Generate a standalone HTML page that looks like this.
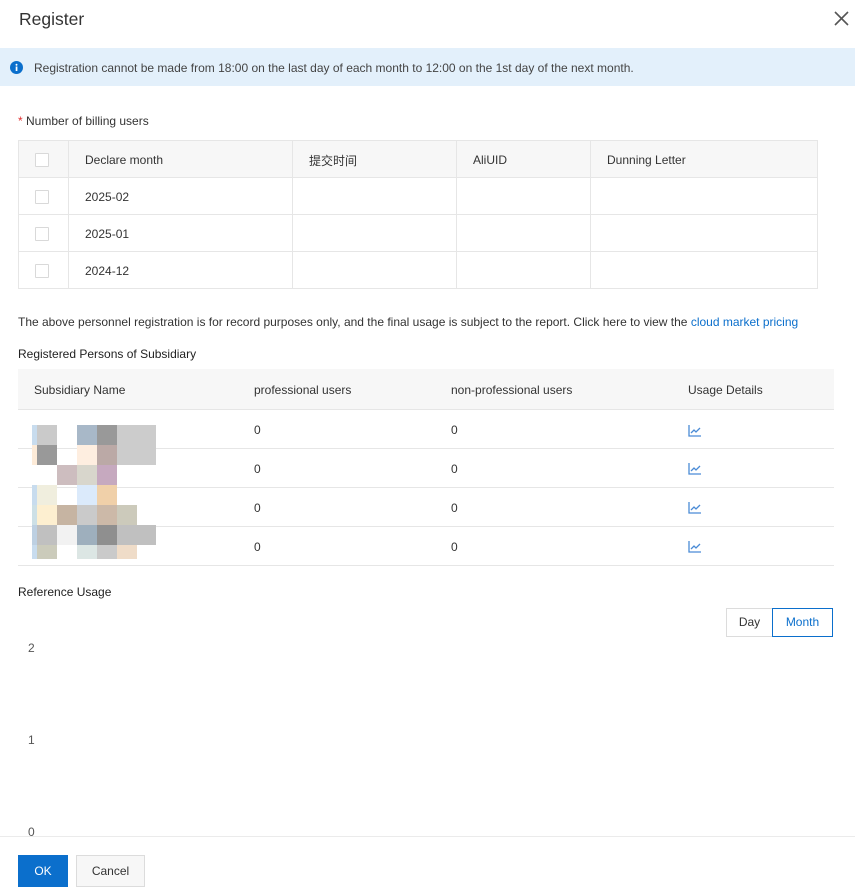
<!DOCTYPE html>
<html><head><meta charset="utf-8"><style>
*{margin:0;padding:0;box-sizing:border-box}
body{width:855px;height:893px;background:#fff;font-family:"Liberation Sans","Noto Sans CJK SC",sans-serif;font-size:12px;color:#333;position:relative;overflow:hidden}
.a{position:absolute;white-space:nowrap}
.cb{position:absolute;width:14px;height:14px;border:1px solid #d9d9d9;background:#fff;border-radius:1px}
.hl{position:absolute;height:1px;background:#e6e6e6}
.vl{position:absolute;width:1px;background:#e6e6e6}
.m{position:absolute;height:20px}
</style></head><body>
<div class="a" style="left:19px;top:9px;font-size:17.5px;color:#333">Register</div>
<svg class="a" style="left:834px;top:11px" width="15" height="15" viewBox="0 0 15 15"><path d="M1 1L14 14M14 1L1 14" stroke="#555" stroke-width="1.6"/></svg>
<div class="a" style="left:0;top:48px;width:855px;height:38px;background:#e3f0fb"></div>
<svg class="a" style="left:10px;top:61px" width="13" height="13" viewBox="0 0 13 13"><circle cx="6.5" cy="6.5" r="6.5" fill="#0b6fcc"/><rect x="5.7" y="5.5" width="1.7" height="4.5" fill="#fff"/><circle cx="6.5" cy="3.7" r="1" fill="#fff"/></svg>
<div class="a" style="left:34px;top:61px;font-size:12px;color:#444">Registration cannot be made from 18:00 on the last day of each month to 12:00 on the 1st day of the next month.</div>
<div class="a" style="left:18px;top:114px"><span style="color:#e03030">*</span> Number of billing users</div>
<div class="a" style="left:18px;top:140px;width:800px;height:149px;border:1px solid #e6e6e6"></div>
<div class="a" style="left:19px;top:141px;width:798px;height:36px;background:#f7f7f7"></div>
<div class="hl" style="left:18px;top:177px;width:800px"></div>
<div class="hl" style="left:18px;top:214px;width:800px"></div>
<div class="hl" style="left:18px;top:251px;width:800px"></div>
<div class="vl" style="left:68px;top:140px;height:149px"></div>
<div class="vl" style="left:292px;top:140px;height:149px"></div>
<div class="vl" style="left:456px;top:140px;height:149px"></div>
<div class="vl" style="left:590px;top:140px;height:149px"></div>
<div class="cb" style="left:35px;top:153px"></div>
<div class="cb" style="left:35px;top:190px"></div>
<div class="cb" style="left:35px;top:227px"></div>
<div class="cb" style="left:35px;top:264px"></div>
<div class="a" style="left:85px;top:153px">Declare month</div>
<div class="a" style="left:309px;top:152px">提交时间</div>
<div class="a" style="left:473px;top:153px">AliUID</div>
<div class="a" style="left:607px;top:153px">Dunning Letter</div>
<div class="a" style="left:85px;top:190px">2025-02</div>
<div class="a" style="left:85px;top:227px">2025-01</div>
<div class="a" style="left:85px;top:264px">2024-12</div>
<div class="a" style="left:18px;top:315px;font-size:12px">The above personnel registration is for record purposes only, and the final usage is subject to the report. Click here to view the <span style="color:#0b6fcc">cloud market pricing</span></div>
<div class="a" style="left:18px;top:347px;color:#222">Registered Persons of Subsidiary</div>
<div class="a" style="left:18px;top:369px;width:816px;height:40px;background:#f7f7f7"></div>
<div class="hl" style="left:18px;top:409px;width:816px"></div>
<div class="hl" style="left:18px;top:448px;width:816px"></div>
<div class="hl" style="left:18px;top:487px;width:816px"></div>
<div class="hl" style="left:18px;top:526px;width:816px"></div>
<div class="hl" style="left:18px;top:565px;width:816px"></div>
<div class="a" style="left:34px;top:383px">Subsidiary Name</div>
<div class="a" style="left:254px;top:383px">professional users</div>
<div class="a" style="left:451px;top:383px">non-professional users</div>
<div class="a" style="left:688px;top:383px">Usage Details</div>
<div class="a" style="left:254px;top:423px">0</div><div class="a" style="left:451px;top:423px">0</div>
<div class="a" style="left:254px;top:462px">0</div><div class="a" style="left:451px;top:462px">0</div>
<div class="a" style="left:254px;top:501px">0</div><div class="a" style="left:451px;top:501px">0</div>
<div class="a" style="left:254px;top:540px">0</div><div class="a" style="left:451px;top:540px">0</div>
<svg class="a" style="left:688px;top:425px" width="13" height="12" viewBox="0 0 13 12"><path d="M1 0V11H13M3 8L6 5L8 7L12 3" stroke="#4a8bd6" stroke-width="1.3" fill="none"/></svg>
<svg class="a" style="left:688px;top:463px" width="13" height="12" viewBox="0 0 13 12"><path d="M1 0V11H13M3 8L6 5L8 7L12 3" stroke="#4a8bd6" stroke-width="1.3" fill="none"/></svg>
<svg class="a" style="left:688px;top:502px" width="13" height="12" viewBox="0 0 13 12"><path d="M1 0V11H13M3 8L6 5L8 7L12 3" stroke="#4a8bd6" stroke-width="1.3" fill="none"/></svg>
<svg class="a" style="left:688px;top:541px" width="13" height="12" viewBox="0 0 13 12"><path d="M1 0V11H13M3 8L6 5L8 7L12 3" stroke="#4a8bd6" stroke-width="1.3" fill="none"/></svg>
<div class="m" style="top:425px;left:32px;width:5px;background:#c8dcee"></div><div class="m" style="top:425px;left:37px;width:20px;background:#cacaca"></div><div class="m" style="top:425px;left:77px;width:20px;background:#a8b8c8"></div><div class="m" style="top:425px;left:97px;width:20px;background:#999"></div><div class="m" style="top:425px;left:117px;width:39px;background:#ccc"></div>
<div class="m" style="top:445px;left:32px;width:5px;background:#fdebd8"></div><div class="m" style="top:445px;left:37px;width:20px;background:#999"></div><div class="m" style="top:445px;left:77px;width:20px;background:#feeee0"></div><div class="m" style="top:445px;left:97px;width:20px;background:#bba9a6"></div><div class="m" style="top:445px;left:117px;width:39px;background:#ccc"></div>
<div class="m" style="top:465px;left:57px;width:20px;background:#cdbdbf"></div><div class="m" style="top:465px;left:77px;width:20px;background:#d8d6cc"></div><div class="m" style="top:465px;left:97px;width:20px;background:#c6a9bf"></div>
<div class="m" style="top:485px;left:32px;width:5px;background:#c8dcee"></div><div class="m" style="top:485px;left:37px;width:20px;background:#f0eede"></div><div class="m" style="top:485px;left:77px;width:20px;background:#dbeafb"></div><div class="m" style="top:485px;left:97px;width:20px;background:#f0d0a9"></div>
<div class="m" style="top:505px;left:32px;width:5px;background:#cde0e6"></div><div class="m" style="top:505px;left:37px;width:20px;background:#fdefd0"></div><div class="m" style="top:505px;left:57px;width:20px;background:#c6b4a2"></div><div class="m" style="top:505px;left:77px;width:20px;background:#cacaca"></div><div class="m" style="top:505px;left:97px;width:20px;background:#ccb9a8"></div><div class="m" style="top:505px;left:117px;width:20px;background:#cccabb"></div>
<div class="m" style="top:525px;left:32px;width:5px;background:#bdd0e2"></div><div class="m" style="top:525px;left:37px;width:20px;background:#c0c0c0"></div><div class="m" style="top:525px;left:57px;width:20px;background:#f2f2f2"></div><div class="m" style="top:525px;left:77px;width:20px;background:#9eafbd"></div><div class="m" style="top:525px;left:97px;width:20px;background:#8f8f8f"></div><div class="m" style="top:525px;left:117px;width:39px;background:#c0c0c0"></div>
<div class="m" style="top:545px;height:14px;left:32px;width:5px;background:#c8dcee"></div><div class="m" style="top:545px;height:14px;left:37px;width:20px;background:#cbcbbb"></div><div class="m" style="top:545px;height:14px;left:77px;width:20px;background:#dce6e4"></div><div class="m" style="top:545px;height:14px;left:97px;width:20px;background:#cacaca"></div><div class="m" style="top:545px;height:14px;left:117px;width:20px;background:#efdcc8"></div>
<div class="a" style="left:18px;top:585px;color:#222">Reference Usage</div>
<div class="a" style="left:726px;top:608px;width:47px;height:29px;border:1px solid #dcdcdc;text-align:center;line-height:27px">Day</div>
<div class="a" style="left:772px;top:608px;width:61px;height:29px;border:1px solid #0b6fcc;text-align:center;line-height:27px;color:#0b6fcc">Month</div>
<div class="a" style="left:28px;top:641px;color:#555">2</div>
<div class="a" style="left:28px;top:733px;color:#555">1</div>
<div class="a" style="left:28px;top:825px;color:#555">0</div>
<div class="hl" style="left:0;top:836px;width:855px;background:#ebebeb"></div>
<div class="a" style="left:18px;top:855px;width:50px;height:32px;background:#0b6fcc;color:#fff;text-align:center;line-height:32px">OK</div>
<div class="a" style="left:76px;top:855px;width:69px;height:32px;border:1px solid #dcdcdc;background:#f7f7f7;text-align:center;line-height:30px">Cancel</div>
</body></html>
